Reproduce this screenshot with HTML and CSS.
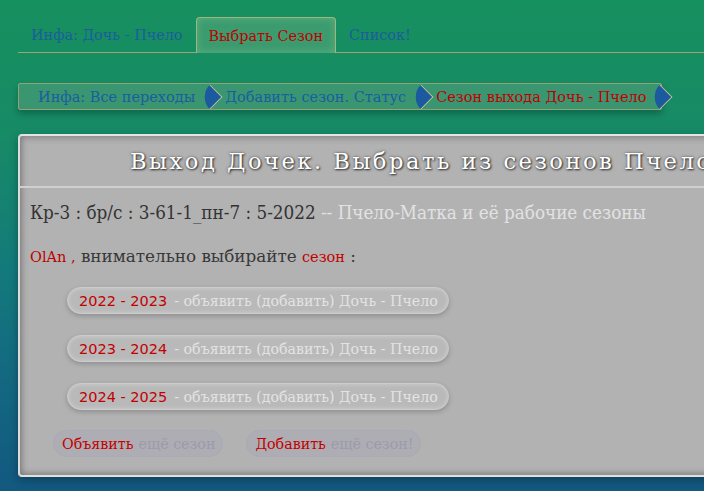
FILE: index.html
```html
<!DOCTYPE html>
<html lang="ru">
<head>
<meta charset="utf-8">
<title>Выход Дочек</title>
<link rel="stylesheet" href="styles.css">
</head>
<body>
<nav class="tabs">
  <a class="tab">Инфа: Дочь - Пчело</a>
  <a class="tab active">Выбрать Сезон</a>
  <a class="tab">Список!</a>
</nav>
<div class="crumbs">
  <a class="crumb">Инфа: Все переходы<span class="arrow"></span></a>
  <a class="crumb">Добавить сезон. Статус<span class="arrow"></span></a>
  <a class="crumb current">Сезон выхода Дочь - Пчело<span class="arrow last"></span></a>
</div>
<section class="panel">
  <h1 class="panel-title">Выход Дочек. Выбрать из сезонов Пчело!</h1>
  <div class="panel-body">
    <p class="info"><span class="dark">Кр-3 : бр/с : 3-61-1_пн-7 : 5-2022</span> <span class="light">-- Пчело-Матка и её рабочие сезоны</span></p>
    <p class="prompt"><span class="name">OlAn ,</span> внимательно выбирайте <span class="red small">сезон</span> :</p>
    <ul class="seasons">
      <li><a class="pill"><span class="years">2022 - 2023</span> - объявить (добавить) Дочь - Пчело</a></li>
      <li><a class="pill"><span class="years">2023 - 2024</span> - объявить (добавить) Дочь - Пчело</a></li>
      <li><a class="pill"><span class="years">2024 - 2025</span> - объявить (добавить) Дочь - Пчело</a></li>
    </ul>
    <div class="actions">
      <a class="btn"><span class="red">Объявить</span> ещё сезон</a>
      <a class="btn"><span class="red">Добавить</span> ещё сезон!</a>
    </div>
  </div>
</section>
</body>
</html>
```
FILE: styles.css
```css
html, body {
  margin: 0;
  height: 100%;
  overflow: hidden;
}
body {
  background: linear-gradient(to bottom, #17905f 0%, #178a66 28%, #137a7c 55%, #136a80 75%, #135880 100%);
  font-family: "DejaVu Serif", serif;
  padding: 17px 0 0 18px;
  box-sizing: border-box;
}
.tabs {
  display: flex;
  border-bottom: 1px solid #9fa477;
  height: 35px;
  align-items: stretch;
}
.tab {
  display: flex;
  align-items: center;
  padding: 0 12px;
  font-size: 14.4px;
  color: #1b5d9e;
  border: 1px solid transparent;
  border-bottom: none;
  border-radius: 4px 4px 0 0;
}
.tab.active {
  color: #c00000;
  border-color: #9fb67e;
  background: #3b9c6f;
  box-shadow: inset 0 0 8px rgba(140, 200, 150, 0.45);
  margin-bottom: -1px;
}
.crumbs {
  display: inline-flex;
  align-items: center;
  margin-top: 30px;
  height: 25px;
  border: 1px solid #95a273;
  background: #3a9671;
  box-shadow: 0 4px 6px rgba(0, 40, 40, 0.35);
  border-radius: 2px;
}
.crumb {
  display: flex;
  align-items: center;
  font-size: 14.5px;
  color: #1b5d9e;
  padding-left: 6px;
}
.crumb:first-child {
  padding-left: 19px;
}
.crumb.current {
  color: #c00000;
}
.arrow {
  display: block;
  flex: none;
  width: 18px;
  height: 18px;
  margin-left: 6px;
  background: #1c5a9f;
  border-top: 1px solid #c2bf90;
  border-right: 1px solid #c2bf90;
  border-radius: 0 0 0 100%;
  transform: rotate(45deg);
  box-sizing: border-box;
}
.arrow.last {
  margin-left: 5px;
  margin-right: -8px;
}
.panel {
  margin-top: 24px;
  width: 1000px;
  height: 343px;
  background: #b2b2b2;
  border-top: 2px solid #e4e4e4;
  border-left: 2px solid #dcdcdc;
  border-bottom: 2px solid #e0e0e0;
  border-radius: 4px 0 0 4px;
  box-shadow: inset 2px 2px 6px rgba(60, 60, 60, 0.35), inset 0 -3px 5px rgba(60, 60, 60, 0.25), 0 3px 8px rgba(0, 0, 0, 0.3);
  box-sizing: border-box;
}
.panel-title {
  margin: 0;
  height: 50px;
  display: flex;
  align-items: center;
  padding-left: 110px;
  font-size: 22.6px;
  font-weight: normal;
  letter-spacing: 2.5px;
  color: #ffffff;
  text-shadow: 1px 1px 2px #333, 0 0 3px #555;
  border-bottom: 2px solid #cfcfcf;
  white-space: nowrap;
}
.panel-body {
  padding: 0 0 0 10px;
}
.info {
  margin: 14px 0 0;
  font-size: 18.7px;
  font-family: "DejaVu Serif", serif;
  font-stretch: condensed;
  line-height: 22px;
}
.dark {
  color: #333333;
}
.light {
  color: #e2e2e2;
}
.prompt {
  margin: 21px 0 0;
  font-size: 16.8px;
  color: #383838;
  line-height: 22px;
}
.prompt .name {
  font-size: 14.5px;
  color: #c00000;
}
.red {
  color: #c40000;
}
.red.small {
  font-size: 14.5px;
}
.seasons {
  list-style: none;
  margin: 19px 0 0;
  padding: 0 0 0 37px;
  display: flex;
  flex-direction: column;
  gap: 21px;
  align-items: flex-start;
}
.pill {
  display: flex;
  align-items: center;
  height: 27px;
  padding: 0 10px 0 11px;
  border-radius: 14px;
  border: 1px solid #cdcdcd;
  background: #b9b9b9;
  box-shadow: 0 2px 5px rgba(0, 0, 0, 0.2), inset 0 0 4px rgba(255, 255, 255, 0.35);
  font-size: 14.2px;
  color: #e3e3e3;
  box-sizing: border-box;
}
.years {
  font-family: "DejaVu Sans", sans-serif;
  font-size: 14.5px;
  color: #c40000;
  margin-right: 7px;
}
.actions {
  display: flex;
  gap: 23px;
  margin: 20px 0 0 23px;
}
.btn {
  display: flex;
  align-items: center;
  height: 27px;
  padding: 0 7px 0 8px;
  border-radius: 14px;
  border: 1px solid #a9a9ba;
  background: #adadb3;
  font-size: 14.25px;
  color: #9b9bad;
  box-sizing: border-box;
}
.btn .red {
  margin-right: 5px;
}
```
